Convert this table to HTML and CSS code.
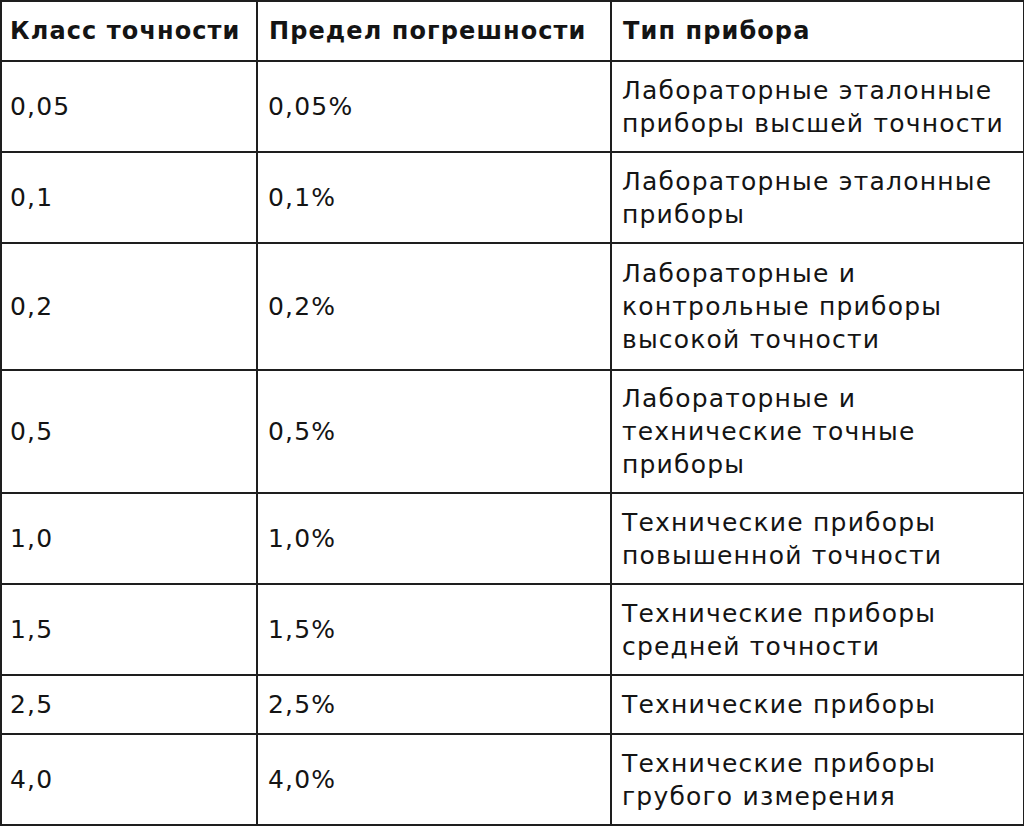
FILE: index.html
```html
<!DOCTYPE html>
<html lang="ru">
<head>
<meta charset="utf-8">
<link rel="stylesheet" href="styles.css">
</head>
<body>
<table class="grid">
  <colgroup>
    <col class="c1"><col class="c2"><col class="c3">
  </colgroup>
  <thead>
    <tr class="head"><th>Класс точности</th><th>Предел погрешности</th><th>Тип прибора</th></tr>
  </thead>
  <tbody>
    <tr class="r2"><td>0,05</td><td>0,05%</td><td>Лабораторные эталонные<br>приборы высшей точности</td></tr>
    <tr class="r2"><td>0,1</td><td>0,1%</td><td>Лабораторные эталонные<br>приборы</td></tr>
    <tr class="r3"><td>0,2</td><td>0,2%</td><td>Лабораторные и<br>контрольные приборы<br>высокой точности</td></tr>
    <tr class="r3b"><td>0,5</td><td>0,5%</td><td>Лабораторные и<br>технические точные<br>приборы</td></tr>
    <tr class="r2"><td>1,0</td><td>1,0%</td><td>Технические приборы<br>повышенной точности</td></tr>
    <tr class="r2"><td>1,5</td><td>1,5%</td><td>Технические приборы<br>средней точности</td></tr>
    <tr class="r1"><td>2,5</td><td>2,5%</td><td>Технические приборы</td></tr>
    <tr class="r2"><td>4,0</td><td>4,0%</td><td>Технические приборы<br>грубого измерения</td></tr>
  </tbody>
</table>
</body>
</html>
```
FILE: styles.css
```css
html, body {
  margin: 0;
  padding: 0;
  background: #ffffff;
}
.grid {
  border-collapse: collapse;
  table-layout: fixed;
  width: 1023px;
  font-family: "DejaVu Sans", sans-serif;
  color: #141414;
}
.c1 { width: 256px; }
.c2 { width: 354px; }
.c3 { width: 413px; }
.grid th, .grid td {
  border: 2px solid #1e1e1e;
  padding: 0 4px 0 8px;
  vertical-align: middle;
  text-align: left;
  font-size: 25px;
  line-height: 33px;
  letter-spacing: 1.2px;
  white-space: nowrap;
}
.grid td + td { padding-left: 10px; }
.grid th {
  font-size: 24px;
  font-weight: 700;
  letter-spacing: 1.1px;
}
.grid th + th { padding-left: 11px; }
.head { height: 60px; }
.r1 { height: 59px; }
.r2 { height: 91px; }
.r3 { height: 127px; }
.r3b { height: 123px; }
```
